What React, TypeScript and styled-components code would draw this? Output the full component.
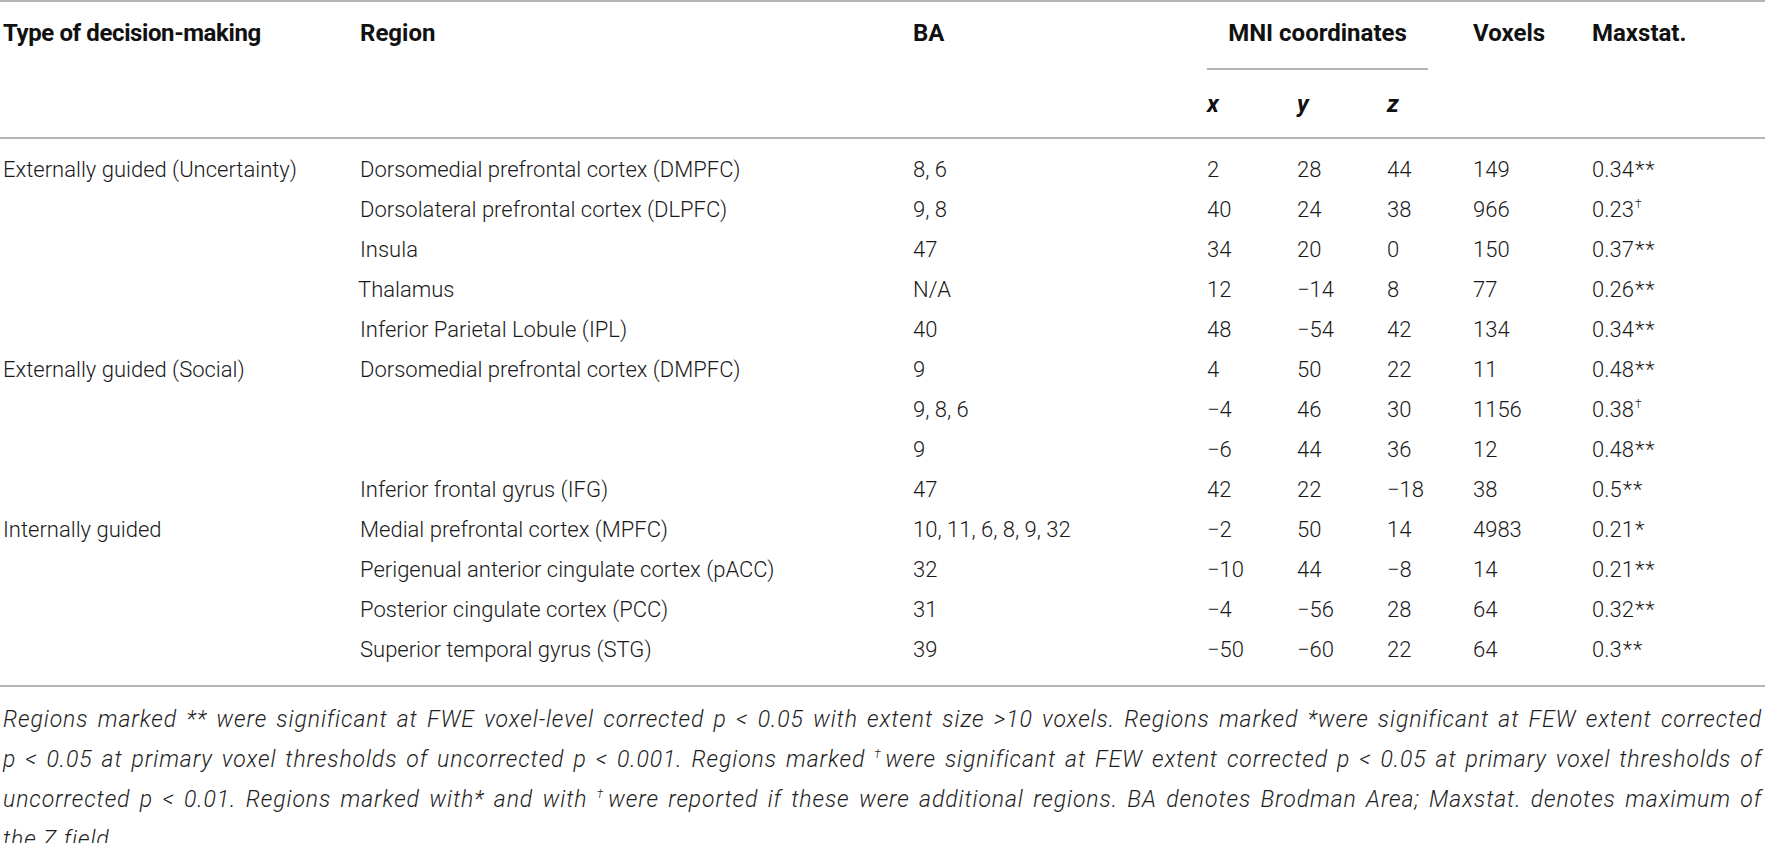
import React from "react";
import styled, { createGlobalStyle } from "styled-components";

const Global = createGlobalStyle`
  html, body { margin: 0; padding: 0; background: #ffffff; }
  body { font-family: Roboto, "Liberation Sans", Arial, sans-serif; color: #1c1c1c; }
`;

const COLS = "357px 553px 294px 90px 90px 86px 119px 1fr";

const Page = styled.div`
  width: 1765px;
  box-sizing: border-box;
`;

const Head = styled.div`
  display: grid;
  grid-template-columns: ${COLS};
  grid-template-rows: 68px 67px;
  padding-left: 3px;
  border-top: 2px solid #b4b4b4;
  border-bottom: 2px solid #b4b4b4;
  font-family: Roboto, "Liberation Sans", Arial, sans-serif;
  font-weight: 700;
  font-size: 24px;
  color: #111;
`;

const HeadCell = styled.div<{ $col: number; $tight?: boolean }>`
  grid-column: ${(p) => p.$col};
  grid-row: 1 / span 2;
  line-height: 62px;
  white-space: nowrap;
  letter-spacing: ${(p) => (p.$tight ? "-0.4px" : "normal")};
`;

const GroupHead = styled.div`
  grid-column: 4 / span 3;
  grid-row: 1;
  margin-right: 45px;
  border-bottom: 2px solid #b4b4b4;
  line-height: 62px;
  text-align: center;
  white-space: nowrap;
`;

const AxisHead = styled.div<{ $col: number }>`
  grid-column: ${(p) => p.$col};
  grid-row: 2;
  font-style: italic;
  line-height: 68px;
`;

const Body = styled.div`
  padding: 11px 0 15px 3px;
  border-bottom: 2px solid #b4b4b4;
`;

const Row = styled.div`
  display: grid;
  grid-template-columns: ${COLS};
  height: 40px;
  line-height: 40px;
  font-family: Roboto, "Liberation Sans", Arial, sans-serif;
  font-weight: 300;
  font-size: 22px;
  color: #1a1a1a;
  white-space: nowrap;
`;

const Cell = styled.div<{ $shift?: number }>`
  margin-left: ${(p) => p.$shift ?? 0}px;
`;

const Mark = styled.span`
  margin-left: 1px;
  letter-spacing: 1px;
`;

const Dagger = styled.sup`
  font-size: 12px;
  line-height: 0;
  vertical-align: 9px;
  margin-left: 1px;
`;

const Notes = styled.div`
  padding: 13px 0 0 3px;
  font-family: Roboto, "Liberation Sans", Arial, sans-serif;
  font-weight: 300;
  font-style: italic;
  font-size: 23px;
  letter-spacing: 0.9px;
  color: #1e1e1e;
`;

const NoteLine = styled.div<{ $last?: boolean }>`
  height: 40px;
  line-height: 40px;
  white-space: nowrap;
  text-align: ${(p) => (p.$last ? "left" : "justify")};
  text-align-last: ${(p) => (p.$last ? "left" : "justify")};
  padding-right: 3px;
`;

const NoteDagger = styled.sup`
  font-size: 12px;
  line-height: 0;
  vertical-align: 9px;
  margin-right: 1px;
`;

type Stat = { v: string; m: "**" | "*" | "†" };

type RowData = {
  type?: string;
  region?: string;
  regionShift?: number;
  ba: string;
  x: string;
  y: string;
  z: string;
  vox: string;
  stat: Stat;
};

const rows: RowData[] = [
  { type: "Externally guided (Uncertainty)", region: "Dorsomedial prefrontal cortex (DMPFC)", ba: "8, 6", x: "2", y: "28", z: "44", vox: "149", stat: { v: "0.34", m: "**" } },
  { region: "Dorsolateral prefrontal cortex (DLPFC)", ba: "9, 8", x: "40", y: "24", z: "38", vox: "966", stat: { v: "0.23", m: "†" } },
  { region: "Insula", ba: "47", x: "34", y: "20", z: "0", vox: "150", stat: { v: "0.37", m: "**" } },
  { region: "Thalamus", regionShift: -2, ba: "N/A", x: "12", y: "−14", z: "8", vox: "77", stat: { v: "0.26", m: "**" } },
  { region: "Inferior Parietal Lobule (IPL)", ba: "40", x: "48", y: "−54", z: "42", vox: "134", stat: { v: "0.34", m: "**" } },
  { type: "Externally guided (Social)", region: "Dorsomedial prefrontal cortex (DMPFC)", ba: "9", x: "4", y: "50", z: "22", vox: "11", stat: { v: "0.48", m: "**" } },
  { ba: "9, 8, 6", x: "−4", y: "46", z: "30", vox: "1156", stat: { v: "0.38", m: "†" } },
  { ba: "9", x: "−6", y: "44", z: "36", vox: "12", stat: { v: "0.48", m: "**" } },
  { region: "Inferior frontal gyrus (IFG)", ba: "47", x: "42", y: "22", z: "−18", vox: "38", stat: { v: "0.5", m: "**" } },
  { type: "Internally guided", region: "Medial prefrontal cortex (MPFC)", ba: "10, 11, 6, 8, 9, 32", x: "−2", y: "50", z: "14", vox: "4983", stat: { v: "0.21", m: "*" } },
  { region: "Perigenual anterior cingulate cortex (pACC)", ba: "32", x: "−10", y: "44", z: "−8", vox: "14", stat: { v: "0.21", m: "**" } },
  { region: "Posterior cingulate cortex (PCC)", ba: "31", x: "−4", y: "−56", z: "28", vox: "64", stat: { v: "0.32", m: "**" } },
  { region: "Superior temporal gyrus (STG)", ba: "39", x: "−50", y: "−60", z: "22", vox: "64", stat: { v: "0.3", m: "**" } },
];

const StatValue: React.FC<{ s: Stat }> = ({ s }) => (
  <>
    {s.v}
    {s.m === "†" ? <Dagger>†</Dagger> : <Mark>{s.m}</Mark>}
  </>
);

export default function App() {
  return (
    <Page>
      <Global />
      <Head>
        <HeadCell $col={1} $tight>Type of decision-making</HeadCell>
        <HeadCell $col={2}>Region</HeadCell>
        <HeadCell $col={3}>BA</HeadCell>
        <GroupHead>MNI coordinates</GroupHead>
        <AxisHead $col={4}>x</AxisHead>
        <AxisHead $col={5}>y</AxisHead>
        <AxisHead $col={6}>z</AxisHead>
        <HeadCell $col={7}>Voxels</HeadCell>
        <HeadCell $col={8}>Maxstat.</HeadCell>
      </Head>
      <Body>
        {rows.map((r, i) => (
          <Row key={i}>
            <Cell>{r.type ?? ""}</Cell>
            <Cell $shift={r.regionShift}>{r.region ?? ""}</Cell>
            <Cell>{r.ba}</Cell>
            <Cell>{r.x}</Cell>
            <Cell>{r.y}</Cell>
            <Cell>{r.z}</Cell>
            <Cell>{r.vox}</Cell>
            <Cell>
              <StatValue s={r.stat} />
            </Cell>
          </Row>
        ))}
      </Body>
      <Notes>
        <NoteLine>
          Regions marked ** were significant at FWE voxel-level corrected p &lt; 0.05 with extent size &gt;10 voxels. Regions marked *were significant at FEW extent corrected
        </NoteLine>
        <NoteLine>
          p &lt; 0.05 at primary voxel thresholds of uncorrected p &lt; 0.001. Regions marked <NoteDagger>†</NoteDagger>were significant at FEW extent corrected p &lt; 0.05 at primary voxel thresholds of
        </NoteLine>
        <NoteLine>
          uncorrected p &lt; 0.01. Regions marked with* and with <NoteDagger>†</NoteDagger>were reported if these were additional regions. BA denotes Brodman Area; Maxstat. denotes maximum of
        </NoteLine>
        <NoteLine $last>the Z field.</NoteLine>
      </Notes>
    </Page>
  );
}
